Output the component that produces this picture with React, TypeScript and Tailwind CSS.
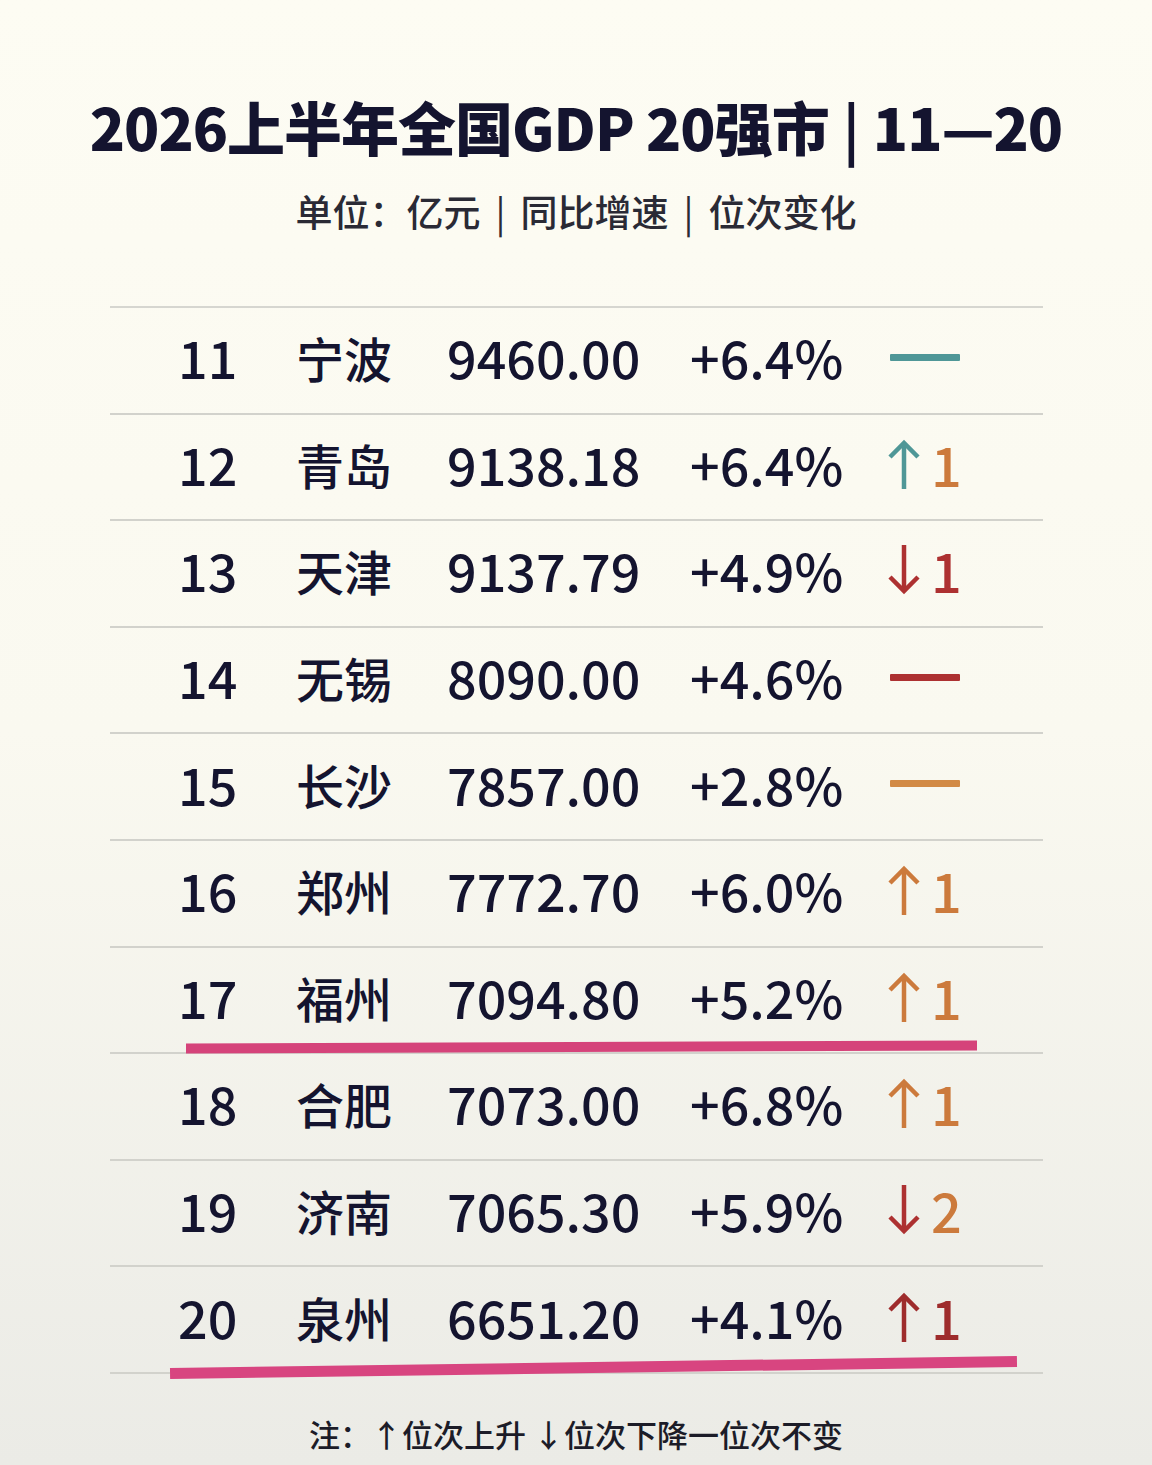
import React from 'react'

type Change = {
  kind: 'up' | 'down' | 'same'
  arrowColor: string
  numColor?: string
  num?: string
}

interface Row {
  rank: string
  city: string
  gdp: string
  growth: string
  change: Change
  mark?: 'fz' | 'qz'
}

const teal = '#4f9797'
const orange = '#cc7a3c'
const red = '#ad3131'
const darkRed = '#9e2c2c'

const rows: Row[] = [
  { rank: '11', city: '宁波', gdp: '9460.00', growth: '+6.4%', change: { kind: 'same', arrowColor: teal } },
  { rank: '12', city: '青岛', gdp: '9138.18', growth: '+6.4%', change: { kind: 'up', arrowColor: teal, numColor: orange, num: '1' } },
  { rank: '13', city: '天津', gdp: '9137.79', growth: '+4.9%', change: { kind: 'down', arrowColor: red, numColor: red, num: '1' } },
  { rank: '14', city: '无锡', gdp: '8090.00', growth: '+4.6%', change: { kind: 'same', arrowColor: red } },
  { rank: '15', city: '长沙', gdp: '7857.00', growth: '+2.8%', change: { kind: 'same', arrowColor: '#d28a45' } },
  { rank: '16', city: '郑州', gdp: '7772.70', growth: '+6.0%', change: { kind: 'up', arrowColor: orange, numColor: orange, num: '1' } },
  { rank: '17', city: '福州', gdp: '7094.80', growth: '+5.2%', change: { kind: 'up', arrowColor: orange, numColor: orange, num: '1' }, mark: 'fz' },
  { rank: '18', city: '合肥', gdp: '7073.00', growth: '+6.8%', change: { kind: 'up', arrowColor: orange, numColor: orange, num: '1' } },
  { rank: '19', city: '济南', gdp: '7065.30', growth: '+5.9%', change: { kind: 'down', arrowColor: red, numColor: orange, num: '2' } },
  { rank: '20', city: '泉州', gdp: '6651.20', growth: '+4.1%', change: { kind: 'up', arrowColor: darkRed, numColor: darkRed, num: '1' }, mark: 'qz' },
]

function Arrow({ dir, color }: { dir: 'up' | 'down'; color: string }) {
  return (
    <svg width="34" height="52" viewBox="0 0 34 52" className={dir === 'down' ? 'rotate-180' : ''}>
      <line x1="17" y1="5" x2="17" y2="51" stroke={color} strokeWidth="4.5" />
      <polyline points="3,19 17,5 31,19" fill="none" stroke={color} strokeWidth="4.5" strokeLinejoin="miter" />
    </svg>
  )
}

function ChangeCell({ change }: { change: Change }) {
  if (change.kind === 'same') {
    return <div className="w-[70px] h-[7px] rounded-[1px]" style={{ backgroundColor: change.arrowColor }} />
  }
  return (
    <div className="flex items-center gap-[10px] -ml-[3px]">
      <Arrow dir={change.kind} color={change.arrowColor} />
      <span className="text-[54px] font-medium leading-none" style={{ color: change.numColor }}>
        {change.num}
      </span>
    </div>
  )
}

export default function App() {
  return (
    <div
      className="relative w-full h-[1465px] overflow-hidden bg-gradient-to-b from-[#fdfcf3] via-[#faf9f0] to-[#ebebe6] text-[#14142f]"
      style={{ fontFamily: '"Noto Sans CJK SC", "Noto Sans", sans-serif' }}
    >
      <div className="pt-[86px] flex flex-col items-center">
        <h1 className="flex items-center text-[58px] font-black leading-[80px] tracking-[-1px] whitespace-nowrap">
          <span>2026上半年全国GDP 20强市</span>
          <span className="mx-[14px] font-bold">|</span>
          <span>11—20</span>
        </h1>
        <p className="mt-[21px] flex items-center text-[37px] font-medium leading-[48px] text-[#2a2a35] whitespace-nowrap">
          <span>单位：亿元</span>
          <span className="mx-[15px] font-normal">|</span>
          <span>同比增速</span>
          <span className="mx-[15px] font-normal">|</span>
          <span>位次变化</span>
        </p>
      </div>

      <div className="mt-[71px] ml-[110px] w-[933px] border-t-2 border-[#d6d6d0]">
        {rows.map(row => (
          <div key={row.rank} className="relative h-[106.6px] border-b-2 border-[#d2d2cc] flex items-center pb-[6px]">
            <div className="flex items-center pl-[68px] text-[52px] font-medium leading-none">
              <span className="w-[118px]">{row.rank}</span>
              <span className="w-[151px] text-[48px]">{row.city}</span>
              <span className="w-[243px]">{row.gdp}</span>
              <span className="w-[200px]">{row.growth}</span>
            </div>
            <ChangeCell change={row.change} />
            {row.mark === 'fz' && (
              <div className="absolute left-[76px] top-[94px] w-[791px] h-[10px] bg-[#d5437a] -rotate-[0.22deg]" />
            )}
            {row.mark === 'qz' && (
              <div className="absolute left-[60px] top-[95px] w-[847px] h-[11px] bg-[#d84580] -rotate-[0.8deg]" />
            )}
          </div>
        ))}
      </div>

      <p className="mt-[40px] text-center text-[31px] font-medium leading-[40px] text-[#1c1c28] whitespace-nowrap">
        注：↑位次上升 ↓位次下降一位次不变
      </p>
    </div>
  )
}
